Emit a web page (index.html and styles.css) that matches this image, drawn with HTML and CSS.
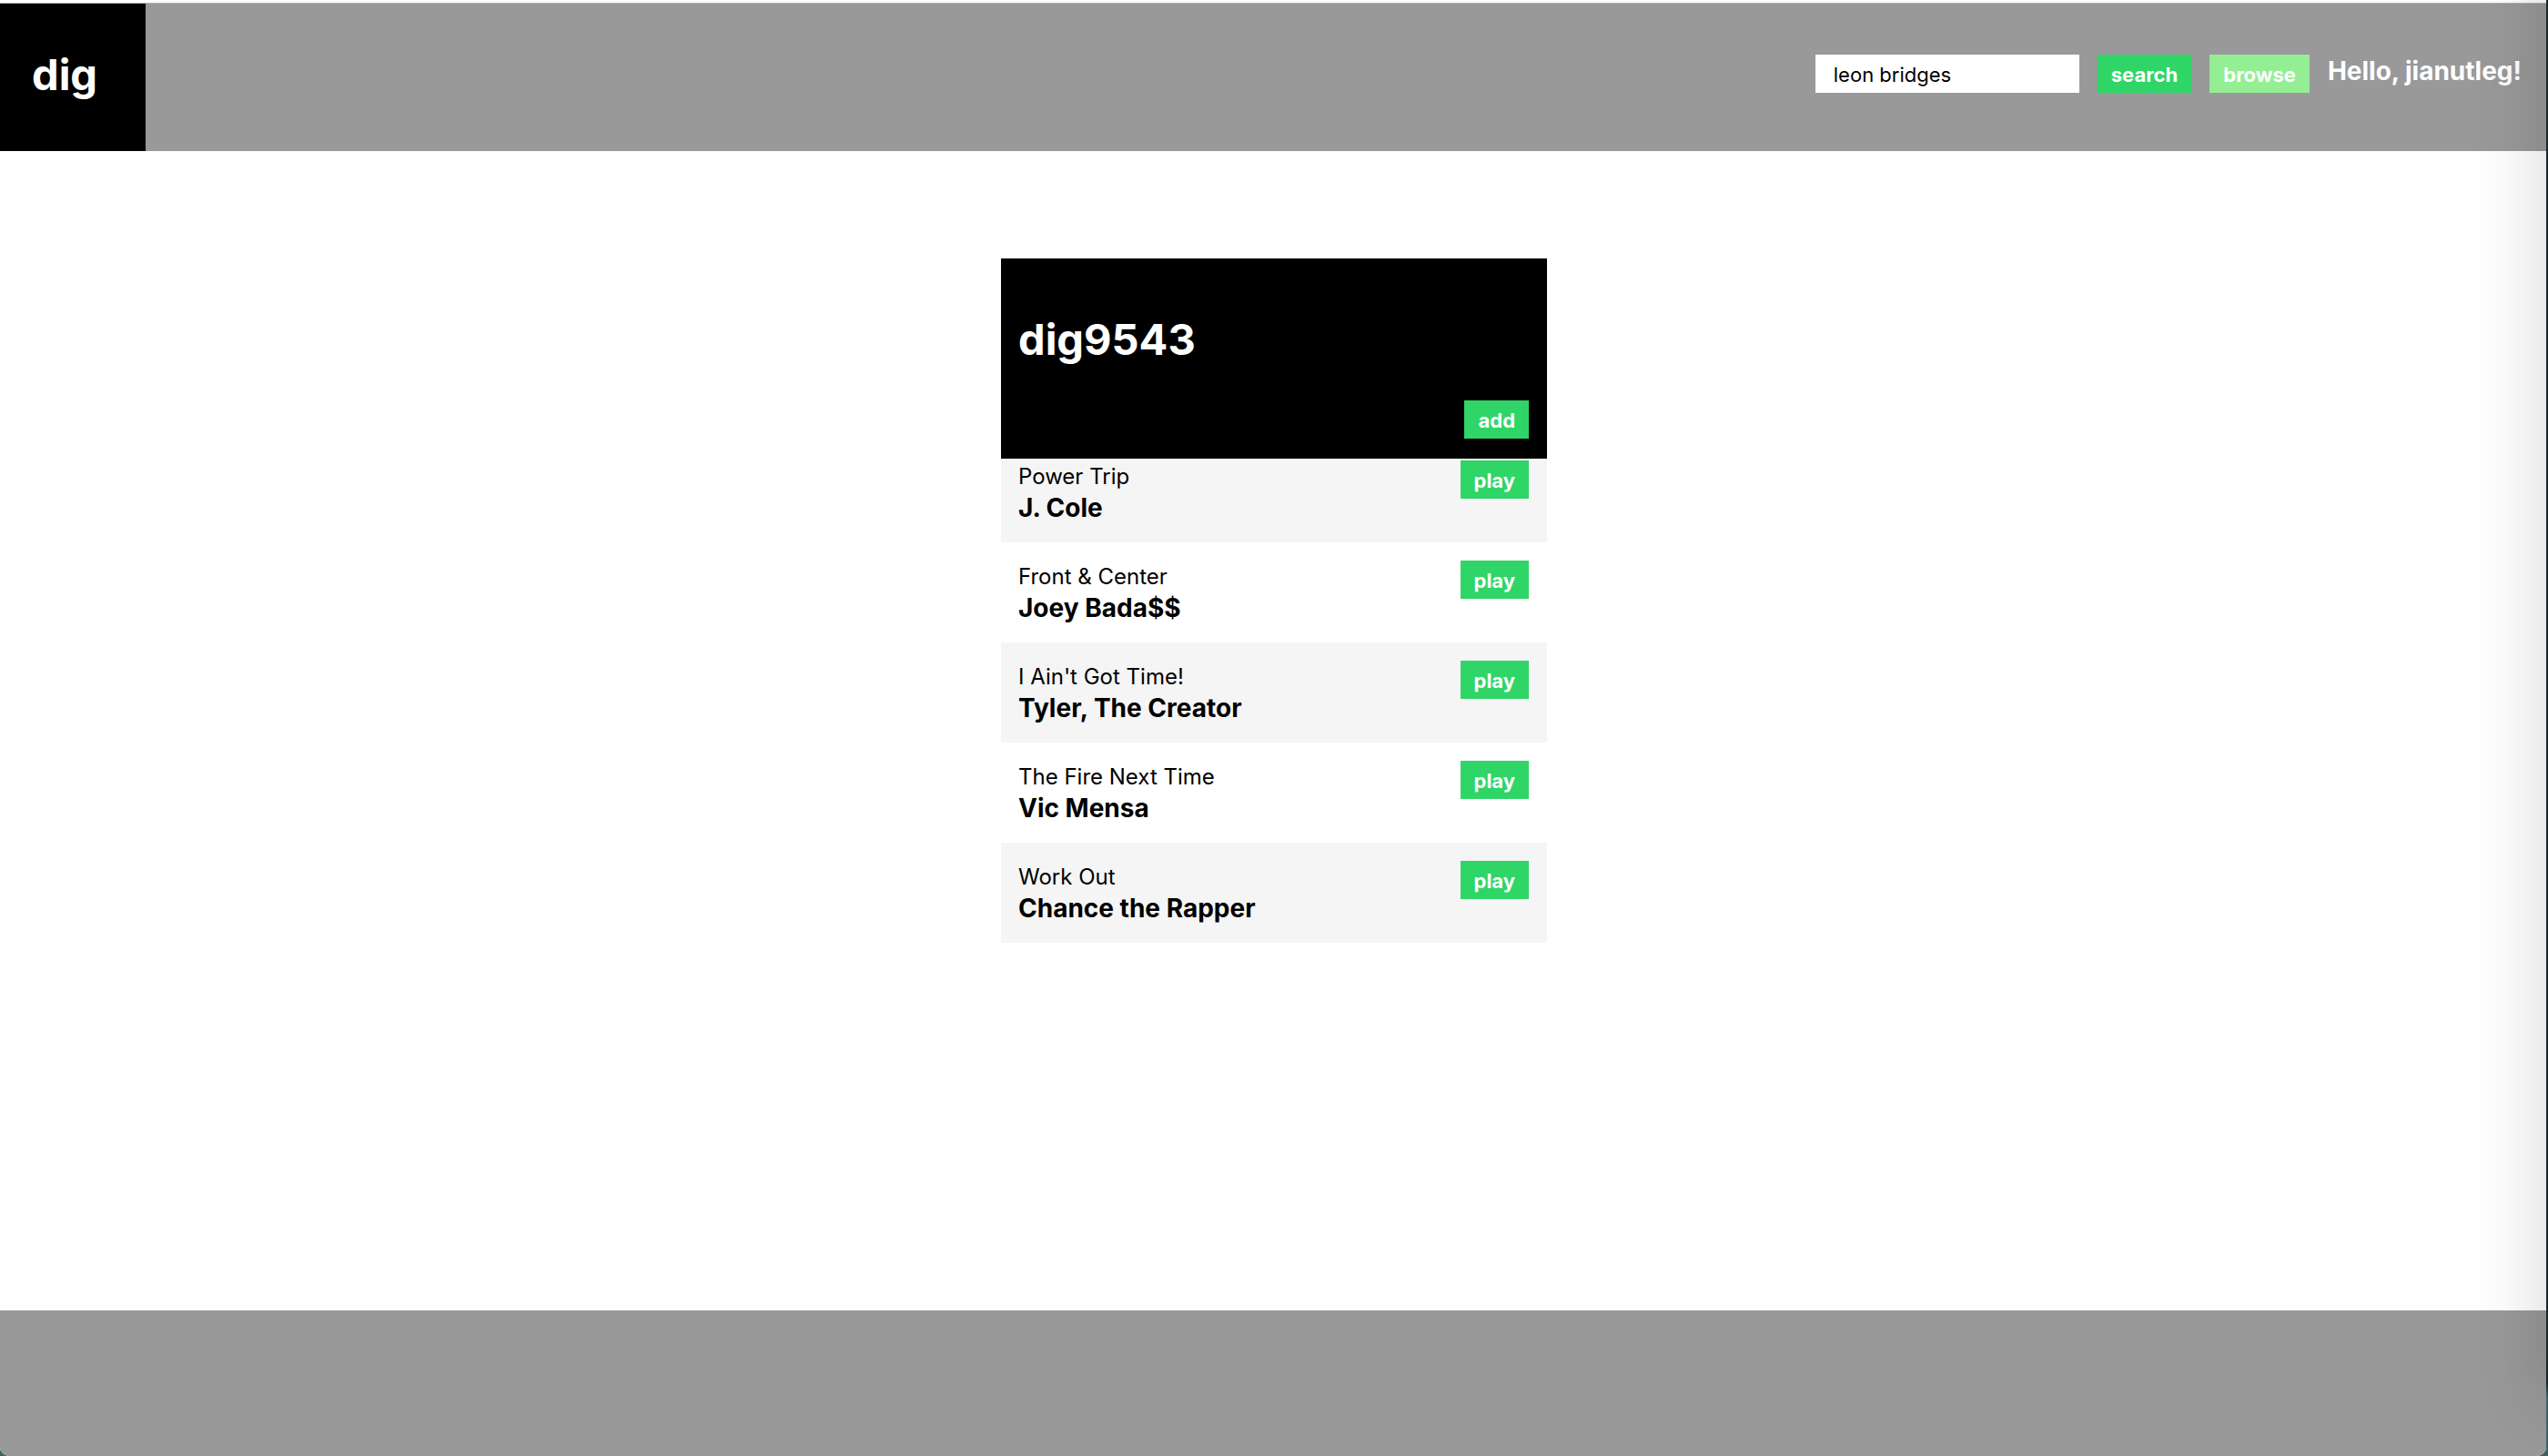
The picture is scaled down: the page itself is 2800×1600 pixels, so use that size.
FILE: index.html
```html
<!DOCTYPE html>
<html lang="en">
<head>
<meta charset="utf-8">
<title>dig</title>
<link rel="stylesheet" href="styles.css">
</head>
<body>
<div class="window">
  <header class="navbar">
    <a class="logo" href="#">dig</a>
    <form class="search">
      <input class="search-input" type="text" aria-label="Search" value="leon bridges">
      <button class="btn" type="button">search</button>
      <button class="btn btn-light" type="button">browse</button>
      <span class="greeting">Hello, jianutleg!</span>
    </form>
  </header>
  <main class="content">
    <section class="playlist">
      <div class="playlist-head">
        <h1 class="playlist-name">dig9543</h1>
        <button class="btn" type="button">add</button>
      </div>
      <ul class="tracks">
        <li class="track"><div><div class="title">Power Trip</div><div class="artist">J. Cole</div></div><button class="btn" type="button">play</button></li>
        <li class="track"><div><div class="title">Front &amp; Center</div><div class="artist">Joey Bada$$</div></div><button class="btn" type="button">play</button></li>
        <li class="track"><div><div class="title">I Ain't Got Time!</div><div class="artist">Tyler, The Creator</div></div><button class="btn" type="button">play</button></li>
        <li class="track"><div><div class="title">The Fire Next Time</div><div class="artist">Vic Mensa</div></div><button class="btn" type="button">play</button></li>
        <li class="track"><div><div class="title">Work Out</div><div class="artist">Chance the Rapper</div></div><button class="btn" type="button">play</button></li>
      </ul>
    </section>
  </main>
  <footer class="player"></footer>
</div>
</body>
</html>
```
FILE: styles.css
```css
* { box-sizing: border-box; }

body {
  margin: 0;
  background: linear-gradient(#16282c 0, #16282c 95%, #3c6068 96%);
  font-family: Inter, "Liberation Sans", sans-serif;
  color: #000;
}

.window {
  position: relative;
  display: flex;
  flex-direction: column;
  min-height: 100vh;
  margin-right: 2px;
  padding-top: 3px;
  overflow: hidden;
  background: #fff;
  border-radius: 0 0 10px 10px;
}

/* soft shade along the right edge of the window */
.window::after {
  content: "";
  position: absolute;
  top: 0;
  right: 0;
  bottom: 0;
  width: 80px;
  background: linear-gradient(to right, transparent, rgba(0, 0, 0, 0.02) 40%, rgba(0, 0, 0, 0.08));
  -webkit-mask-image: linear-gradient(#000 93%, transparent);
  mask-image: linear-gradient(#000 93%, transparent);
  pointer-events: none;
}

.navbar {
  display: flex;
  justify-content: space-between;
  align-items: stretch;
  height: 163px;
  border-top: 1px solid #b0b0b0;
  background: #999;
}

.logo {
  display: flex;
  align-items: center;
  width: 160px;
  padding: 0 0 8px 35px;
  background: #000;
  color: #fff;
  font-size: 47px;
  font-weight: 700;
  text-decoration: none;
}

.search {
  display: flex;
  align-items: flex-start;
  gap: 20px;
  padding: 56px 27px 0 0;
}

.search-input {
  width: 290px;
  height: 42px;
  padding: 2px 20px 0;
  border: 0;
  border-radius: 0;
  background: #fff;
  color: #000;
  font: 22px Inter, "Liberation Sans", sans-serif;
}

.btn {
  flex: none;
  height: 42px;
  padding: 2px 15px 0;
  border: 0;
  background: #2fd566;
  color: #fff;
  font: 700 22px Inter, "Liberation Sans", sans-serif;
}

.btn-light { background: #94ee94; }

.greeting {
  color: #fff;
  font-size: 28px;
  font-weight: 700;
  line-height: 36px;
  white-space: nowrap;
}

.content {
  flex: 1;
  padding: 118px 0 0 2px;
}

.playlist {
  width: 600px;
  margin: 0 auto;
}

.playlist-head {
  position: relative;
  z-index: 1;
  display: flex;
  flex-direction: column;
  justify-content: space-between;
  align-items: flex-end;
  height: 220px;
  padding: 59px 20px 22px 19px;
  background: #000;
}

.playlist-name {
  align-self: flex-start;
  margin: 0;
  color: #fff;
  font-size: 47px;
  font-weight: 700;
  line-height: 60px;
}

/* the list is scrolled slightly beneath its heading */
.tracks {
  margin: -18px 0 0;
  padding: 0;
  list-style: none;
}

.track {
  display: flex;
  justify-content: space-between;
  align-items: flex-start;
  padding: 20px 20px 20px 19px;
}

.track:nth-child(odd) { background: #f5f5f5; }

.title {
  font-size: 24px;
  line-height: 35px;
}

.artist {
  font-size: 28px;
  font-weight: 700;
  line-height: 35px;
}

.player {
  height: 160px;
  background: #999;
}
```
